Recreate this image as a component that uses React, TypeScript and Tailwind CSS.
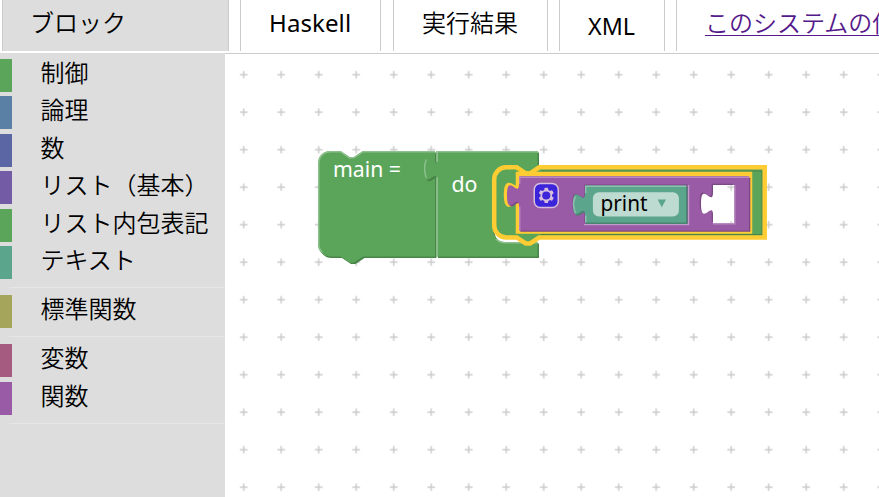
import React from 'react';

const FONT = "font-['Noto_Sans','Noto_Sans_CJK_JP',sans-serif]";
const JP = "font-['Noto_Sans_CJK_JP',sans-serif] font-[350]";

type Category = { label: string; bar: string };

const groups: Category[][] = [
  [
    { label: '制御', bar: 'bg-[#5ba55b]' },
    { label: '論理', bar: 'bg-[#5b80a5]' },
    { label: '数', bar: 'bg-[#5b67a5]' },
    { label: 'リスト（基本）', bar: 'bg-[#745ba5]' },
    { label: 'リスト内包表記', bar: 'bg-[#5ba55b]' },
    { label: 'テキスト', bar: 'bg-[#5ba58c]' },
  ],
  [{ label: '標準関数', bar: 'bg-[#a5a55b]' }],
  [
    { label: '変数', bar: 'bg-[#a55b80]' },
    { label: '関数', bar: 'bg-[#995ba5]' },
  ],
];

// Puzzle tab on the left side of a block, drawn upwards.
const TAB_UP = 'c0,-15 -12,12 -12,-11.25 s12,3.75 12,-11.25';
const NOTCH = 'l9,6 4.5,0 9,-6';
const NOTCH_BACK = 'l-9,6 -4.5,0 -9,-6';

const MAIN = `M318,163 a12,12 0 0 1 12,-12 H340.5 ${NOTCH} H435 V256.5 H363 ${NOTCH_BACK} H330 a12,12 0 0 1 -12,-12 z`;
const DO = `M436.5,151 H537.5 V167 H539.5 ${NOTCH_BACK} H505 a12,12 0 0 0 -12,12 V230 a12,12 0 0 0 12,12 H537.5 V256.5 H436.5 V181 ${TAB_UP} z`;
const CHILD = `M494.2,179.3 a12,12 0 0 1 12,-12 H516.7 ${NOTCH} H764.7 V237.4 H539.2 ${NOTCH_BACK} H506.2 a12,12 0 0 1 -12,-12 z`;
const PURPLE = `M519,176.5 H749 V230.5 H519 V206.5 ${TAB_UP} z`;
const TEAL = `M585,185.5 H686 V222.5 H585 V215.5 ${TAB_UP} z`;
const SOCKET = `M713,185 H734 V223 H713 V215 ${TAB_UP} z`;

const GEAR =
  'm4.203,7.296 0,1.368 -0.92,0.677 -0.11,0.41 0.9,1.559 0.41,0.11 1.043,-0.457 1.187,0.683 0.127,1.134 0.3,0.3 1.8,0 0.3,-0.299 0.127,-1.138 1.185,-0.682 1.046,0.458 0.409,-0.11 0.9,-1.559 -0.11,-0.41 -0.92,-0.677 0,-1.366 0.92,-0.677 0.11,-0.41 -0.9,-1.559 -0.409,-0.109 -1.046,0.458 -1.185,-0.682 -0.127,-1.138 -0.3,-0.299 -1.8,0 -0.3,0.3 -0.126,1.135 -1.187,0.682 -1.043,-0.457 -0.41,0.11 -0.899,1.559 0.108,0.409z';

function Tab({ className, children }: { className: string; children: React.ReactNode }) {
  return (
    <div className={`h-[51px] shrink-0 border-x border-[#ccc] whitespace-nowrap text-[24px] text-black ${className}`}>
      {children}
    </div>
  );
}

function Separator() {
  return (
    <div className="flex h-[11.5px] items-start pl-1">
      <div className="h-px flex-1 bg-linear-to-r from-[#ddd] to-[#e6e6e6] to-5%" />
    </div>
  );
}

function Toolbox() {
  return (
    <nav className="w-[225px] shrink-0 bg-[#ddd] pt-[5.75px]">
      {groups.map((group, i) => (
        <div key={i}>
          {group.map(({ label, bar }) => (
            <div key={label} className="flex h-[37.5px] items-start">
              <div className={`h-[33px] w-3 shrink-0 ${bar}`} />
              <div className={`pl-[28.5px] text-[24px] leading-[26px] whitespace-nowrap text-black ${JP}`}>{label}</div>
            </div>
          ))}
          <div className="-mb-[3.5px] pt-[3.5px]">
            <Separator />
          </div>
        </div>
      ))}
    </nav>
  );
}

function Workspace() {
  return (
    <svg className={`block h-[443px] w-[654px] ${FONT}`} viewBox="225 54 654 443">
      <defs>
        <pattern id="grid" x="225" y="55.95" width="37.5" height="37.5" patternUnits="userSpaceOnUse">
          <path d="M14.9,18.75 H22.5 M18.7,14.95 V22.55" stroke="#ccc" strokeWidth="1.5" />
        </pattern>
      </defs>
      <rect x="225" y="54" width="654" height="443" fill="#fff" />
      <rect x="225" y="54" width="654" height="443" fill="url(#grid)" />

      <path d={MAIN} fill="#498449" transform="translate(1.5 1.5)" />
      <path d={MAIN} fill="#5ba55b" />
      <path
        d={`M322.5,252.5 A11.25,11.25 0 0 1 318.75,244 V163 A11.25,11.25 0 0 1 330,151.75 H340.5 ${NOTCH} H435`}
        fill="none"
        stroke="#8cc08c"
        strokeWidth="1.5"
      />

      <path d={DO} fill="#498449" transform="translate(1.5 1.5)" />
      <path d={DO} fill="#5ba55b" />
      <path
        d="M437.2,256.5 V177 M437.2,162 V151.75 H538 M426.3,159.5 Q422.8,168 426.3,178 M496,239 A12,12 0 0 0 505,242.75 H538"
        fill="none"
        stroke="#8cc08c"
        strokeWidth="1.5"
      />
      <path d="M427.5,180.5 L430.5,180 L436,176.5" fill="none" stroke="#498449" strokeWidth="1.5" />

      <path d={CHILD} fill="#5ba55b" />
      <path d="M541,171 H762 V234.5 H541" fill="none" stroke="#498449" strokeWidth="1" />
      <path d={CHILD} fill="none" stroke="#fc3" strokeWidth="4.5" />

      <path d={`M518,174 H750 V231.5 H518 V206 ${TAB_UP} z`} fill="#995ba5" stroke="#fc3" strokeWidth="4.5" />
      <path d={PURPLE} fill="#7a4984" transform="translate(1.3 1.3)" />
      <path d={PURPLE} fill="#995ba5" />
      <path d="M519.75,230.5 V206.5 M519.75,184 V177.25 H749.5" fill="none" stroke="#b88cc0" strokeWidth="1.3" />

      <g opacity="0.6" transform="translate(534.25 183.5) scale(1.5)">
        <rect width="16" height="16" rx="4" fill="#00f" stroke="#fff" />
        <path d={GEAR} fill="#fff" />
        <circle cx="8" cy="8" r="2.7" fill="#00f" />
      </g>

      <path d={`M584.5,184.5 H688 V224 H584.5 V215 ${TAB_UP} z`} fill="#7a4984" />
      <path d="M584,224.5 H688.5 V185" fill="none" stroke="#c39ccc" strokeWidth="1.5" />
      <path d={TEAL} fill="#498470" transform="translate(1.5 1.5)" />
      <path d={TEAL} fill="#5ba58c" />
      <path
        d="M585.75,222.5 V215.5 M585.75,193 V186.25 H686.5 M575.5,196.5 Q571.5,203 575.5,213"
        fill="none"
        stroke="#8cc0ae"
        strokeWidth="1.5"
      />
      <rect x="592.9" y="192.2" width="86" height="24.4" rx="6" fill="#fff" fillOpacity="0.6" />

      <path d={SOCKET} fill="#7a4984" transform="translate(-1.3 -1.3)" />
      <path d={SOCKET} fill="#fff" />
      <path d={SOCKET} fill="url(#grid)" />
      <path d="M713,223.75 H734.75 V185" fill="none" stroke="#b88cc0" strokeWidth="1.5" />

      <g fontSize="21.5">
        <text x="333" y="177" fill="#fff" textLength="68" lengthAdjust="spacingAndGlyphs">main =</text>
        <text x="451.5" y="192" fill="#fff" textLength="26" lengthAdjust="spacingAndGlyphs">do</text>
        <text x="600.5" y="211" fill="#000" textLength="47" lengthAdjust="spacingAndGlyphs">print</text>
      </g>
      <path d="M657.6,199.6 h8.4 l-4.2,7.6 z" fill="#5ba58c" />
    </svg>
  );
}

export default function App() {
  return (
    <div className={`flex h-[497px] w-[879px] flex-col overflow-hidden bg-white ${FONT}`}>
      <header className="flex h-[53px] shrink-0 items-start overflow-hidden pl-[2px]">
        <Tab className={`w-[227px] bg-[#ddd] pl-[27px] leading-[44px] ${JP}`}>ブロック</Tab>
        <Tab className="ml-[11px] w-[141px] pl-7 leading-[46px] tracking-[0.1px]">Haskell</Tab>
        <Tab className={`ml-3 w-[155px] pl-7 leading-[44px] ${JP}`}>実行結果</Tab>
        <Tab className="ml-[11px] w-[106px] pt-[3px] pl-7 leading-[46px]">
          <span className="inline-block origin-left scale-x-[0.97]">XML</span>
        </Tab>
        <Tab className={`ml-[11px] w-[340px] pl-7 leading-[44px] ${JP}`}>
          <a className="text-[#551a8b] underline decoration-1 underline-offset-3">このシステムの使い方</a>
        </Tab>
      </header>
      <div className="flex min-h-0 flex-1">
        <Toolbox />
        <main className="flex-1 border-t border-[#ccc]">
          <Workspace />
        </main>
      </div>
    </div>
  );
}
